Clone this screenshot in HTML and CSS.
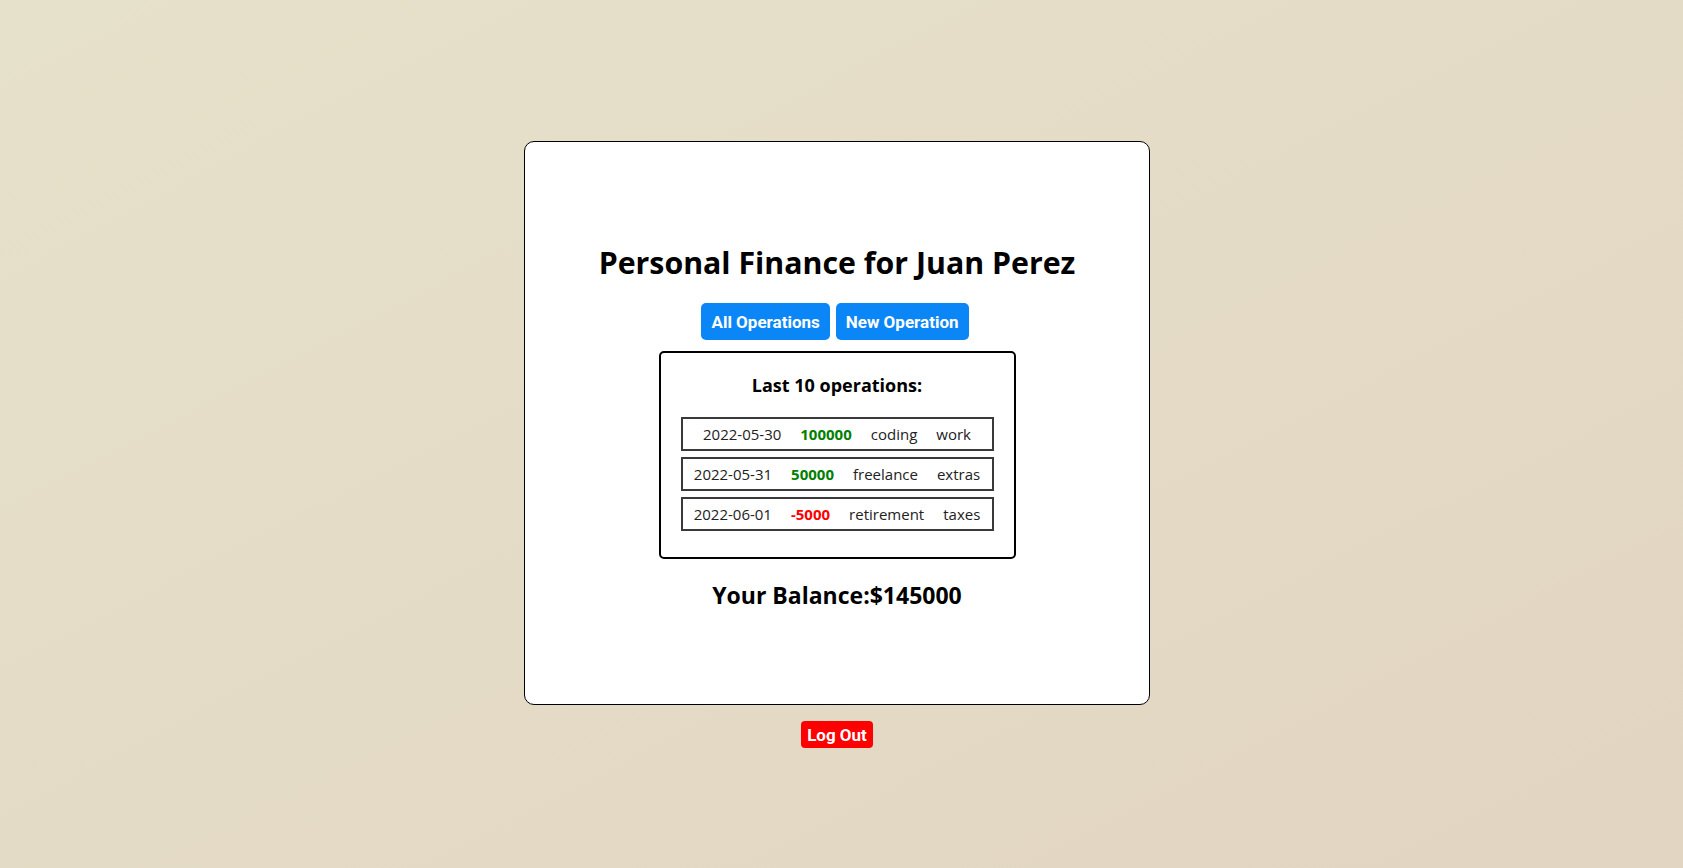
FILE: index.html
```html
<!DOCTYPE html>
<html lang="en">
<head>
<meta charset="utf-8">
<title>Personal Finance</title>
<link rel="stylesheet" href="styles.css">
</head>
<body>
<main class="page">
  <section class="card">
    <h1 class="title">Personal Finance for Juan Perez</h1>
    <div class="actions">
      <button class="btn btn-blue">All Operations</button>
      <button class="btn btn-blue">New Operation</button>
    </div>
    <div class="ops">
      <h3 class="ops-title">Last 10 operations:</h3>
      <div class="row"><span>2022-05-30</span><span class="amt pos">100000</span><span>coding</span><span>work</span></div>
      <div class="row"><span>2022-05-31</span><span class="amt pos">50000</span><span>freelance</span><span>extras</span></div>
      <div class="row"><span>2022-06-01</span><span class="amt neg">-5000</span><span>retirement</span><span>taxes</span></div>
    </div>
    <h2 class="balance">Your Balance:$145000</h2>
  </section>
  <button class="btn btn-red">Log Out</button>
</main>
</body>
</html>
```
FILE: styles.css
```css
html, body {
  margin: 0;
  padding: 0;
}
body {
  min-height: 100vh;
  background: linear-gradient(to bottom right, #e6e1ca, #e2d5c1);
  font-family: "Open Sans", "Noto Sans", sans-serif;
  color: #000;
}
.page {
  display: flex;
  flex-direction: column;
  align-items: center;
  padding-top: 141px;
  padding-right: 9px;
}
.card {
  box-sizing: border-box;
  width: 626px;
  height: 564px;
  background: #fff;
  border: 1px solid #000;
  border-radius: 10px;
  display: flex;
  flex-direction: column;
  align-items: center;
  padding-top: 101px;
}
.title {
  margin: 0;
  font-size: 30.3px;
  line-height: 40px;
  font-weight: 700;
}
.actions {
  display: flex;
  gap: 6px;
  margin-top: 20px;
  margin-right: 4px;
}
.btn {
  border: none;
  color: #fff;
  font-family: Roboto, "Liberation Sans", sans-serif;
  font-weight: 700;
  cursor: pointer;
}
.btn-blue {
  background: #0a86f7;
  border-radius: 5px;
  height: 37px;
  padding: 0 10px;
  font-size: 17px;
}
.ops {
  box-sizing: border-box;
  width: 357px;
  margin-top: 11px;
  border: 2px solid #000;
  border-radius: 5px;
  padding: 20px 20px 20px;
}
.ops-title {
  margin: 0 0 20px;
  text-align: center;
  font-size: 18px;
  line-height: 24px;
  font-weight: 700;
}
.row {
  box-sizing: border-box;
  height: 34px;
  border: 2px solid #3a3a3a;
  margin-bottom: 6px;
  display: flex;
  justify-content: center;
  align-items: center;
  gap: 19px;
  font-size: 15px;
  color: #222;
}
.amt {
  font-weight: 700;
}
.pos {
  color: #008000;
}
.neg {
  color: #f00;
}
.balance {
  margin: 20px 0 0;
  font-size: 23px;
  line-height: 32px;
  font-weight: 700;
}
.btn-red {
  margin-top: 16px;
  background: #f00;
  border-radius: 4px;
  height: 27px;
  padding: 0 6px;
  font-size: 17px;
}
```
